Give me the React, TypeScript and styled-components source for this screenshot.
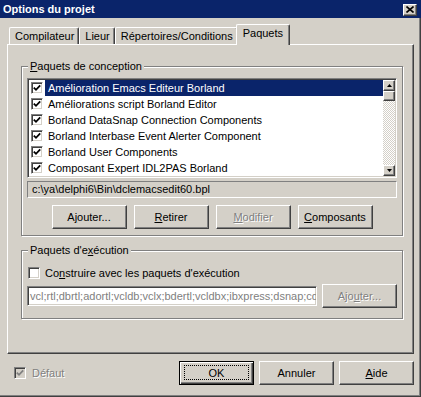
import styled, { createGlobalStyle, css } from 'styled-components';

const face = '#d4d0c8';
const shadow = '#808080';
const dark = '#404040';
const navy = '#0a246a';

const GlobalStyle = createGlobalStyle`
  html, body {
    margin: 0;
    background: ${face};
  }
  body {
    font-family: "Liberation Sans", Arial, sans-serif;
    font-size: 11px;
    color: #000;
  }
`;

const raised = css`
  border: 1px solid;
  border-color: #fff ${dark} ${dark} #fff;
  box-shadow: inset -1px -1px 0 ${shadow}, inset 1px 1px 0 ${face};
`;

const sunken = css`
  border: 1px solid;
  border-color: ${shadow} #fff #fff ${shadow};
  box-shadow: inset 1px 1px 0 ${dark}, inset -1px -1px 0 ${face};
`;

const disabledText = css`
  color: ${shadow};
  text-shadow: 1px 1px 0 #fff;
`;

const Window = styled.div`
  width: 421px;
  height: 397px;
  display: flex;
  flex-direction: column;
  background: ${face};
  box-sizing: border-box;
`;

const TitleBar = styled.div`
  height: 18px;
  flex: none;
  display: flex;
  align-items: center;
  justify-content: space-between;
  padding: 0 4px 0 3px;
  background: ${navy};
`;

const Title = styled.span`
  color: #fff;
  font-weight: bold;
  font-size: 11px;
`;

const CloseButton = styled.button`
  ${raised};
  width: 14px;
  height: 12px;
  padding: 0;
  background: ${face};
  display: flex;
  align-items: center;
  justify-content: center;
  margin-top: 1px;
`;

const Body = styled.div`
  flex: 1;
  display: flex;
  flex-direction: column;
  padding: 6px 6px 0 7px;
  border-right: 1px solid ${dark};
  border-bottom: 1px solid ${dark};
  box-shadow: inset -1px -1px 0 ${shadow};
`;

const TabStrip = styled.div`
  height: 20px;
  display: flex;
  align-items: flex-end;
  padding-left: 2px;
`;

const Tab = styled.div<{ $active?: boolean }>`
  height: 17px;
  line-height: 16px;
  padding: 0 4px 0 5px;
  box-sizing: border-box;
  border-top: 1px solid #fff;
  border-left: 1px solid #fff;
  border-right: 1px solid ${dark};
  border-radius: 2px 2px 0 0;
  box-shadow: inset -1px 0 0 ${shadow};
  background: ${face};
  white-space: nowrap;

  ${({ $active }) =>
    $active &&
    css`
      height: 21px;
      line-height: 17px;
      margin: 0 -2px -1px -2px;
      padding: 0 6px 0 6px;
      position: relative;
      z-index: 1;
    `}
`;

const TabPanel = styled.div`
  height: 310px;
  box-sizing: border-box;
  padding: 21px 10px 0 13px;
  border: 1px solid;
  border-color: #fff ${dark} ${dark} #fff;
  box-shadow: inset -1px -1px 0 ${shadow};
`;

const GroupBox = styled.div<{ $gap?: number; $pad: string }>`
  position: relative;
  display: flex;
  flex-direction: column;
  padding: ${({ $pad }) => $pad};
  border: 1px solid ${shadow};
  box-shadow: inset 1px 1px 0 #fff, 1px 1px 0 #fff;
  margin-top: ${({ $gap }) => $gap ?? 0}px;
`;

const GroupLabel = styled.span`
  position: absolute;
  top: -7px;
  left: 6px;
  padding: 0 2px;
  line-height: 13px;
  background: ${face};
`;

const Key = styled.span`
  text-decoration: underline;
`;

const ListBox = styled.div`
  ${sunken};
  height: 100px;
  box-sizing: border-box;
  display: flex;
  padding: 1px;
  background: #fff;
`;

const Rows = styled.div`
  flex: 1;
  display: flex;
  flex-direction: column;
  overflow: hidden;
`;

const Row = styled.div`
  height: 16px;
  display: flex;
  align-items: center;
  padding-left: 2px;
`;

const RowText = styled.span<{ $selected?: boolean }>`
  flex: 1;
  height: 16px;
  line-height: 16px;
  margin-left: 2px;
  padding-left: 3px;
  white-space: nowrap;
  overflow: hidden;
  background: ${({ $selected }) => ($selected ? navy : 'transparent')};
  color: ${({ $selected }) => ($selected ? '#fff' : '#000')};
`;

const CheckBox = styled.span<{ $disabled?: boolean }>`
  ${sunken};
  width: 12px;
  height: 12px;
  flex: none;
  box-sizing: border-box;
  display: flex;
  align-items: center;
  justify-content: center;
  background: ${({ $disabled }) => ($disabled ? face : '#fff')};
`;

const ScrollBar = styled.div`
  width: 12px;
  display: flex;
  flex-direction: column;
`;

const ScrollArrow = styled.div`
  ${raised};
  height: 11px;
  box-sizing: border-box;
  background: ${face};
  display: flex;
  align-items: center;
  justify-content: center;
`;

const ScrollThumb = styled.div`
  ${raised};
  height: 10px;
  box-sizing: border-box;
  background: ${face};
`;

const ScrollTrack = styled.div`
  flex: 1;
  background: repeating-conic-gradient(#fff 0 25%, ${face} 0 50%) 0 0 / 2px 2px;
`;

const PathField = styled.div`
  height: 17px;
  margin-top: 3px;
  box-sizing: border-box;
  line-height: 15px;
  padding-left: 4px;
  border: 1px solid;
  border-color: ${shadow} #fff #fff ${shadow};
`;

const ButtonRow = styled.div`
  display: flex;
  justify-content: center;
  gap: 7px;
  margin-top: 7px;
`;

const Button = styled.button<{ $default?: boolean }>`
  ${raised};
  position: relative;
  width: 75px;
  height: 24px;
  padding: 0;
  flex: none;
  background: ${face};
  font: inherit;
  color: #000;

  &:disabled {
    ${disabledText};
  }

  ${({ $default }) =>
    $default &&
    css`
      border: 1px solid #000;
      box-shadow: inset 1px 1px 0 #fff, inset -1px -1px 0 ${dark}, inset -2px -2px 0 ${shadow};

      &::after {
        content: '';
        position: absolute;
        inset: 3px 4px 4px 4px;
        border: 1px dotted #000;
      }
    `}
`;

const CheckRow = styled.label<{ $disabled?: boolean }>`
  display: flex;
  align-items: center;
  gap: 5px;
  height: 13px;
  padding-left: 1px;
  ${({ $disabled }) => $disabled && disabledText};
`;

const EditRow = styled.div`
  display: flex;
  align-items: center;
  gap: 5px;
  margin-top: 5px;
  height: 24px;
`;

const EditField = styled.div`
  ${sunken};
  flex: 1;
  height: 20px;
  box-sizing: border-box;
  line-height: 18px;
  padding-left: 2px;
  background: #fff;
  color: ${shadow};
  white-space: nowrap;
  overflow: hidden;
`;

const Footer = styled.div`
  flex: 1;
  display: flex;
  align-items: flex-start;
  gap: 5px;
  padding: 7px 0 0 7px;
`;

const FooterCheck = styled(CheckRow)`
  height: 24px;
  margin-right: auto;
  padding-left: 0;
  gap: 6px;
`;

function Tick({ color = '#000' }: { color?: string }) {
  return (
    <svg width="8" height="8" viewBox="0 0 8 8">
      <path d="M0.8 3.6 L3 5.8 L7.2 1.4" fill="none" stroke={color} strokeWidth="1.8" />
    </svg>
  );
}

function Arrow({ down }: { down?: boolean }) {
  return (
    <svg width="5" height="3" viewBox="0 0 5 3">
      <polygon points={down ? '0,0 5,0 2.5,3' : '0,3 5,3 2.5,0'} fill="#000" />
    </svg>
  );
}

const packages = [
  'Amélioration Emacs Editeur Borland',
  'Améliorations script Borland Editor',
  'Borland DataSnap Connection Components',
  'Borland Interbase Event Alerter Component',
  'Borland User Components',
  'Composant Expert IDL2PAS Borland',
];

export default function App() {
  return (
    <>
      <GlobalStyle />
      <Window>
        <TitleBar>
          <Title>Options du projet</Title>
          <CloseButton type="button" aria-label="Fermer">
            <svg width="8" height="7" viewBox="0 0 8 7">
              <path d="M0.5 0.5 L7.5 6.5 M7.5 0.5 L0.5 6.5" stroke="#000" strokeWidth="1.6" />
            </svg>
          </CloseButton>
        </TitleBar>

        <Body>
          <TabStrip>
            <Tab>Compilateur</Tab>
            <Tab>Lieur</Tab>
            <Tab>Répertoires/Conditions</Tab>
            <Tab $active>Paquets</Tab>
          </TabStrip>

          <TabPanel>
            <GroupBox $pad="11px 5px 6px">
              <GroupLabel>
                <Key>P</Key>aquets de conception
              </GroupLabel>
              <ListBox>
                <Rows>
                  {packages.map((name, i) => (
                    <Row key={name}>
                      <CheckBox>
                        <Tick />
                      </CheckBox>
                      <RowText $selected={i === 0}>{name}</RowText>
                    </Row>
                  ))}
                </Rows>
                <ScrollBar>
                  <ScrollArrow>
                    <Arrow />
                  </ScrollArrow>
                  <ScrollThumb />
                  <ScrollTrack />
                  <ScrollArrow>
                    <Arrow down />
                  </ScrollArrow>
                </ScrollBar>
              </ListBox>
              <PathField>c:\ya\delphi6\Bin\dclemacsedit60.bpl</PathField>
              <ButtonRow>
                <Button type="button">
                  A<Key>j</Key>outer...
                </Button>
                <Button type="button">
                  <Key>R</Key>etirer
                </Button>
                <Button type="button" disabled>
                  <Key>M</Key>odifier
                </Button>
                <Button type="button">
                  <Key>C</Key>omposants
                </Button>
              </ButtonRow>
            </GroupBox>

            <GroupBox $gap={14} $pad="15px 5px 10px">
              <GroupLabel>
                Paquets d'e<Key>x</Key>écution
              </GroupLabel>
              <CheckRow>
                <CheckBox />
                <span>
                  Co<Key>n</Key>struire avec les paquets d'exécution
                </span>
              </CheckRow>
              <EditRow>
                <EditField>vcl;rtl;dbrtl;adortl;vcldb;vclx;bdertl;vcldbx;ibxpress;dsnap;cd</EditField>
                <Button type="button" disabled>
                  Ajo<Key>u</Key>ter...
                </Button>
              </EditRow>
            </GroupBox>
          </TabPanel>

          <Footer>
            <FooterCheck $disabled>
              <CheckBox $disabled>
                <Tick color={shadow} />
              </CheckBox>
              <span>Défaut</span>
            </FooterCheck>
            <Button type="button" $default>
              OK
            </Button>
            <Button type="button">Annuler</Button>
            <Button type="button">
              <Key>A</Key>ide
            </Button>
          </Footer>
        </Body>
      </Window>
    </>
  );
}
